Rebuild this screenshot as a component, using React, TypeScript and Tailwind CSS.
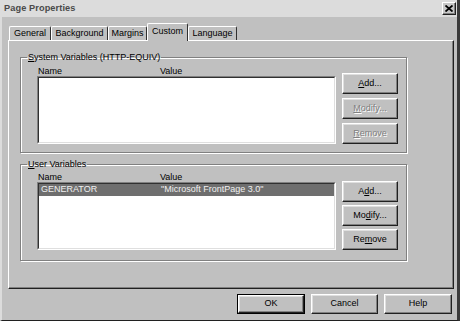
import React from "react";

function U({ children }: { children: React.ReactNode }) {
  return <span className="underline underline-offset-1">{children}</span>;
}

function Btn({
  children,
  disabled,
  def,
  className = "",
}: {
  children: React.ReactNode;
  disabled?: boolean;
  def?: boolean;
  className?: string;
}) {
  const inner = (
    <div
      className={`flex items-center justify-center h-full w-full bg-[#c0c0c0] border border-t-white border-l-white border-r-[#202020] border-b-[#202020] shadow-[inset_-1px_-1px_0_#808080,inset_1px_1px_0_#dfdfdf] ${
        disabled ? "text-[#808080] [text-shadow:1px_1px_0_#ffffff]" : "text-black"
      }`}
    >
      {children}
    </div>
  );
  if (def) {
    return <div className={`border border-black ${className}`}>{inner}</div>;
  }
  return <div className={className}>{inner}</div>;
}

function Tab({ label, selected, w }: { label: string; selected?: boolean; w: string }) {
  return (
    <div
      className={`flex items-start justify-center border-t border-l border-r border-t-white border-l-white border-r-[#303030] rounded-t-[2px] bg-[#c0c0c0] ${w} ${
        selected ? "h-[18px] -mb-px relative z-10 pt-[2px]" : "h-[14px] pt-px"
      }`}
    >
      <span className="leading-[11px] whitespace-nowrap">{label}</span>
    </div>
  );
}

function ListBox({ rows }: { rows: { name: string; value: string }[] }) {
  return (
    <div className="h-[68px] w-[299px] border border-t-[#808080] border-l-[#808080] border-r-white border-b-white">
      <div className="h-full w-full bg-white border border-t-[#303030] border-l-[#303030] border-r-[#dfdfdf] border-b-[#dfdfdf]">
        {rows.map((r) => (
          <div key={r.name} className="flex h-[12px] items-center bg-[#6e6e6e] text-[#f0f0f0]">
            <span className="w-[122px] pl-[2px]">{r.name}</span>
            <span>{r.value}</span>
          </div>
        ))}
      </div>
    </div>
  );
}

function Group({
  legend,
  rows,
  buttons,
  gaps,
  headerH,
  pb,
}: {
  legend: React.ReactNode;
  rows: { name: string; value: string }[];
  buttons: React.ReactNode[];
  gaps: string;
  headerH: string;
  pb: string;
}) {
  return (
    <fieldset className={`w-[387px] border border-[#808080] shadow-[inset_1px_1px_0_#ffffff,1px_1px_0_#ffffff] pl-[16px] ${pb}`}>
      <legend className="-ml-[10px] px-px leading-[11px]">{legend}</legend>
      <div className="flex">
        <div className="flex flex-col">
          <div className={`flex ${headerH} items-end leading-[10px]`}>
            <span className="w-[123px] pl-[1px]">Name</span>
            <span>Value</span>
          </div>
          <ListBox rows={rows} />
        </div>
        <div className={`flex flex-col ml-[6px] ${gaps} self-end`}>{buttons}</div>
      </div>
    </fieldset>
  );
}

export default function App() {
  return (
    <div className="w-[460px] h-[321px] bg-[#c0c0c0] border-l-2 border-l-[#dcdcdc] border-r-[3px] border-r-[#3a3a3a] border-b border-b-[#202020] font-['Liberation_Sans',Arial,sans-serif] text-[9px] text-black overflow-hidden flex flex-col">
      {/* title bar */}
      <div className="h-[17px] bg-[#dcdcdc] flex items-center justify-between pl-[2px] pr-[1px] shrink-0">
        <span className="font-bold text-[#4a4a4a] text-[9.2px] tracking-[0.1px]">Page Properties</span>
        <div className="w-[14px] h-[13px] border border-t-white border-l-white border-r-[#202020] border-b-[#202020] bg-[#c8c8c8] flex items-center justify-center shadow-[inset_-1px_-1px_0_#808080]">
          <svg width="8" height="7" viewBox="0 0 8 7">
            <path d="M0.5 0.5 L7.5 6.5 M7.5 0.5 L0.5 6.5" stroke="#000" strokeWidth="1.8" />
          </svg>
        </div>
      </div>

      {/* tabs */}
      <div className="flex items-end h-[17px] mt-[6px] ml-[7px] shrink-0">
        <Tab label="General" w="w-[42px]" />
        <Tab label="Background" w="w-[57px]" />
        <Tab label="Margins" w="w-[39px]" />
        <Tab label="Custom" selected w="w-[41px]" />
        <Tab label="Language" w="w-[49px]" />
      </div>

      {/* panel */}
      <div className="ml-[6px] w-[446px] h-[249px] border border-t-white border-l-white border-r-[#202020] border-b-[#202020] shadow-[inset_-1px_-1px_0_#808080] pl-[11px] pt-[11px] flex flex-col gap-[6px] shrink-0">
        <Group
          legend={
            <>
              <U>S</U>ystem Variables (HTTP-EQUIV)
            </>
          }
          rows={[]}
          headerH="h-[13px]"
          gaps="gap-[4px]"
          pb="pb-[8px]"
          buttons={[
            <Btn key="a" className="w-[56px] h-[21px]">
              <U>A</U>dd...
            </Btn>,
            <Btn key="m" disabled className="w-[56px] h-[21px]">
              <U>M</U>odify...
            </Btn>,
            <Btn key="r" disabled className="w-[56px] h-[21px]">
              <U>R</U>emove
            </Btn>,
          ]}
        />
        <Group
          legend={
            <>
              <U>U</U>ser Variables
            </>
          }
          rows={[{ name: "GENERATOR", value: "\"Microsoft FrontPage 3.0\"" }]}
          headerH="h-[12px]"
          gaps="gap-[3px]"
          pb="pb-[10px]"
          buttons={[
            <Btn key="a" className="w-[56px] h-[21px]">
              A<U>d</U>d...
            </Btn>,
            <Btn key="m" className="w-[56px] h-[21px]">
              Mo<U>d</U>ify...
            </Btn>,
            <Btn key="r" className="w-[56px] h-[21px]">
              Re<U>m</U>ove
            </Btn>,
          ]}
        />
      </div>

      {/* bottom buttons */}
      <div className="flex justify-end gap-[6px] mt-[5px] pr-[5px] shrink-0">
        <Btn def className="w-[68px] h-[20px]">
          OK
        </Btn>
        <Btn className="w-[67px] h-[20px]">Cancel</Btn>
        <Btn className="w-[68px] h-[20px]">Help</Btn>
      </div>
    </div>
  );
}
